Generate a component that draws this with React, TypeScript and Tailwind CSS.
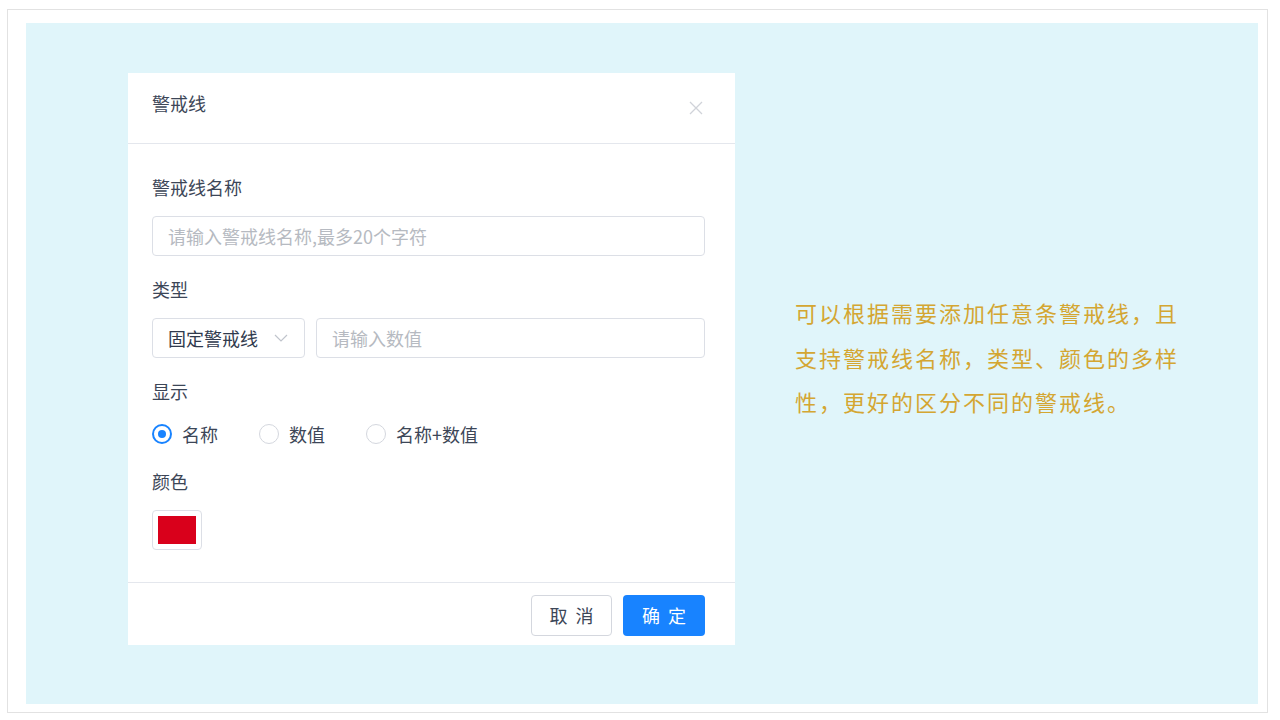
import React from 'react';

const font = { fontFamily: '"Noto Sans CJK SC", "Noto Sans", sans-serif' };

const Radio = ({ label, checked }: { label: string; checked?: boolean }) => (
  <div className="flex items-center gap-[10px]">
    <span
      className={
        checked
          ? 'w-[20px] h-[20px] rounded-full border-2 border-[#1883ff] flex items-center justify-center'
          : 'w-[20px] h-[20px] rounded-full border border-[#d4d7de] bg-white'
      }
    >
      {checked && <span className="w-[8px] h-[8px] rounded-full bg-[#1883ff]" />}
    </span>
    <span className="text-[18px] leading-[22px] text-[#3c4657]">{label}</span>
  </div>
);

export default function App() {
  return (
    <div className="w-[1280px] h-[720px] bg-white pt-[9px] pl-[7px]" style={font}>
      <div className="w-[1261px] h-[704px] border border-[#e2e2e2] pl-[18px] pt-[13px] pr-[9px] pb-[8px]">
        <div className="w-full h-full bg-[#e0f5fa] flex items-start pl-[102px] pt-[50px]">
          {/* Dialog */}
          <div className="w-[607px] bg-white flex flex-col">
            <div className="h-[71px] border-b border-[#e4e7ed] pl-6 pr-[32px] pt-[19px] flex items-start justify-between">
              <span className="text-[18px] leading-[22px] text-[#3c4657]">警戒线</span>
              <svg width="14" height="14" viewBox="0 0 14 14" className="mt-[9px]">
                <path d="M1 1L13 13M13 1L1 13" stroke="#d0d3d9" strokeWidth="1.3" />
              </svg>
            </div>

            <div className="pl-6 pr-[30px] pt-[32px] pb-[32px] flex flex-col">
              <span className="text-[18px] leading-[22px] text-[#3c4657]">警戒线名称</span>
              <div className="mt-[18px] h-[40px] rounded-[4px] border border-[#dcdfe6] flex items-center pl-[15px]">
                <span className="text-[18px] text-[#b6bac1]">请输入警戒线名称,最多20个字符</span>
              </div>

              <span className="mt-[22px] text-[18px] leading-[22px] text-[#3c4657]">类型</span>
              <div className="mt-[18px] flex gap-[11px]">
                <div className="w-[153px] h-[40px] rounded-[4px] border border-[#dcdfe6] flex items-center justify-between pl-[15px] pr-[16px]">
                  <span className="text-[18px] text-[#303a4d]">固定警戒线</span>
                  <svg width="14" height="8" viewBox="0 0 14 8">
                    <path d="M1 1L7 7L13 1" fill="none" stroke="#c0c4cc" strokeWidth="1.2" />
                  </svg>
                </div>
                <div className="flex-1 h-[40px] rounded-[4px] border border-[#dcdfe6] flex items-center pl-[15px]">
                  <span className="text-[18px] text-[#b6bac1]">请输入数值</span>
                </div>
              </div>

              <span className="mt-[22px] text-[18px] leading-[22px] text-[#3c4657]">显示</span>
              <div className="mt-[21px] flex items-center gap-[41px]">
                <Radio label="名称" checked />
                <Radio label="数值" />
                <Radio label="名称+数值" />
              </div>

              <span className="mt-[25px] text-[18px] leading-[22px] text-[#3c4657]">颜色</span>
              <div className="mt-[18px] w-[50px] h-[40px] rounded-[4px] border border-[#dcdfe6] p-[5px]">
                <div className="w-full h-full bg-[#d9001b]" />
              </div>
            </div>

            <div className="border-t border-[#e4e7ed] pt-[12px] pb-[9px] pr-[30px] flex justify-end gap-[11px]">
              <button className="w-[81px] h-[41px] rounded-[4px] border border-[#d4d7de] bg-white text-[18px] tracking-[8px] pl-[8px] text-[#3c4657]">
                取消
              </button>
              <button className="w-[82px] h-[41px] rounded-[4px] bg-[#1883ff] text-[18px] tracking-[8px] pl-[8px] text-white">
                确定
              </button>
            </div>
          </div>

          {/* Description */}
          <p className="ml-[60px] mt-[217px] w-[400px] text-[22px] leading-[44.5px] tracking-[2px] text-[#d4a632]">
            可以根据需要添加任意条警戒线，且
            <br />
            支持警戒线名称，类型、颜色的多样
            <br />
            性，更好的区分不同的警戒线。
          </p>
        </div>
      </div>
    </div>
  );
}
